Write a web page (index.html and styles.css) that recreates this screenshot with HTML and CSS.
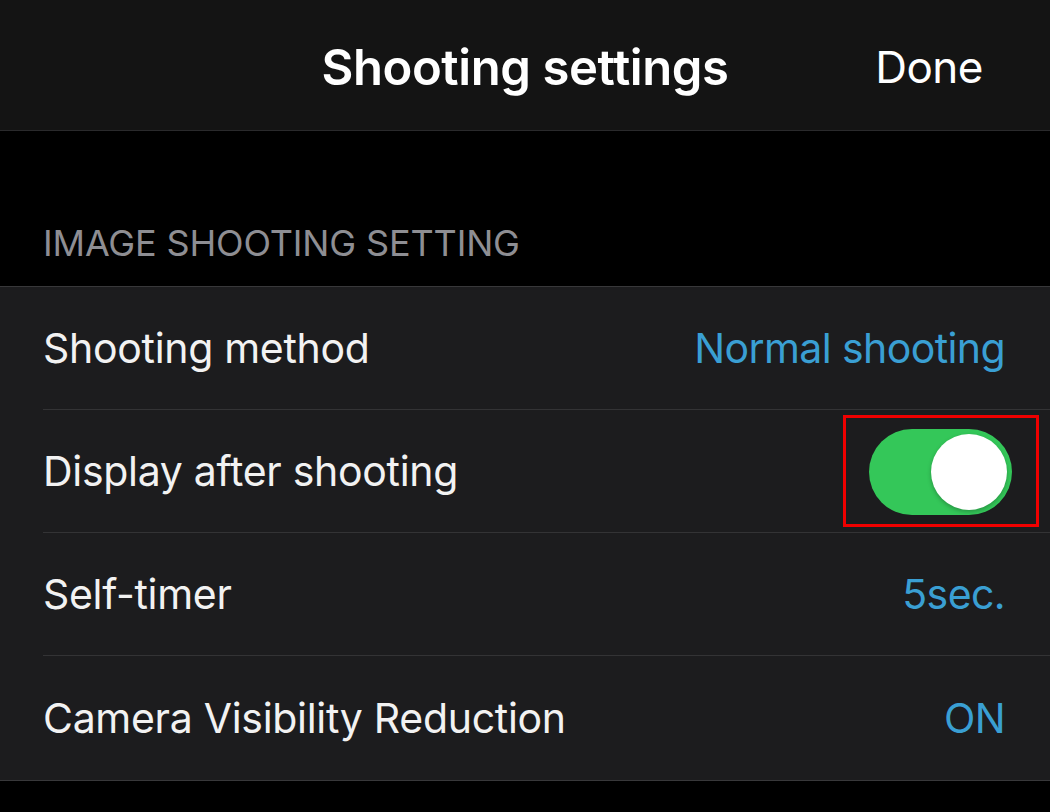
FILE: index.html
```html
<!DOCTYPE html>
<html lang="en">
<head>
<meta charset="utf-8">
<title>Shooting settings</title>
<link rel="stylesheet" href="styles.css">
</head>
<body>
<div class="screen">
  <header class="navbar">
    <span class="nav-side"></span>
    <h1 class="nav-title">Shooting settings</h1>
    <span class="nav-side nav-right"><span class="nav-done">Done</span></span>
  </header>
  <div class="section-head">
    <span class="section-label">IMAGE SHOOTING SETTING</span>
  </div>
  <ul class="list">
    <li class="row">
      <span class="row-label">Shooting method</span>
      <span class="row-value">Normal shooting</span>
    </li>
    <li class="row row-toggle">
      <span class="row-label">Display after shooting</span>
      <span class="highlight">
        <span class="switch"><span class="knob"></span></span>
      </span>
    </li>
    <li class="row">
      <span class="row-label">Self-timer</span>
      <span class="row-value">5sec.</span>
    </li>
    <li class="row row-last">
      <span class="row-label">Camera Visibility Reduction</span>
      <span class="row-value">ON</span>
    </li>
  </ul>
</div>
</body>
</html>
```

FILE: styles.css
```css
html, body {
  margin: 0;
  padding: 0;
  background: #000;
}
body {
  font-family: "Inter", "Liberation Sans", sans-serif;
  color: #fff;
}
.screen {
  width: 1050px;
  height: 812px;
  overflow: hidden;
  background: #000;
}
.navbar {
  height: 130px;
  background: #141414;
  border-bottom: 1px solid #2a2a2c;
  display: grid;
  grid-template-columns: 1fr auto 1fr;
  align-items: center;
}
.nav-title {
  margin: 0;
  font-size: 49px;
  font-weight: 600;
  letter-spacing: -0.4px;
  color: #fff;
  padding-top: 4px;
}
.nav-right {
  display: flex;
  justify-content: flex-end;
  padding-right: 67px;
  padding-top: 4px;
}
.nav-done {
  font-size: 44px;
  font-weight: 400;
  letter-spacing: -0.5px;
  color: #fff;
}
.section-head {
  height: 155px;
  display: flex;
  align-items: flex-end;
  padding-left: 43px;
  box-sizing: border-box;
  padding-bottom: 21px;
}
.section-label {
  font-size: 36px;
  color: #8e8e93;
  letter-spacing: -0.15px;
}
.list {
  list-style: none;
  margin: 0;
  padding: 0 0 0 43px;
  background: #1c1c1e;
  border-top: 1px solid #38383a;
  border-bottom: 1px solid #38383a;
}
.row {
  height: 123px;
  box-sizing: border-box;
  display: flex;
  align-items: center;
  justify-content: space-between;
  padding-right: 45px;
  border-bottom: 1px solid #333335;
}
.row-last {
  border-bottom: none;
  height: 124px;
}
.row-label {
  font-size: 41px;
  font-weight: 400;
  letter-spacing: -0.3px;
  color: #f2f2f2;
}
.row-value {
  font-size: 41px;
  font-weight: 400;
  letter-spacing: -0.6px;
  color: #3a9fd3;
}
.row-toggle {
  padding-right: 11px;
}
.highlight {
  display: flex;
  width: 196px;
  height: 112px;
  box-sizing: border-box;
  border: 3px solid #f00000;
  padding: 11px 24px 9px 23px;
}
.switch {
  display: flex;
  justify-content: flex-end;
  align-items: center;
  width: 143px;
  height: 86px;
  border-radius: 43px;
  background: #34c759;
  padding-right: 5px;
  box-sizing: border-box;
}
.knob {
  width: 76px;
  height: 76px;
  border-radius: 50%;
  background: #fff;
  box-shadow: 0 2px 4px rgba(0, 0, 0, 0.25);
}
```
